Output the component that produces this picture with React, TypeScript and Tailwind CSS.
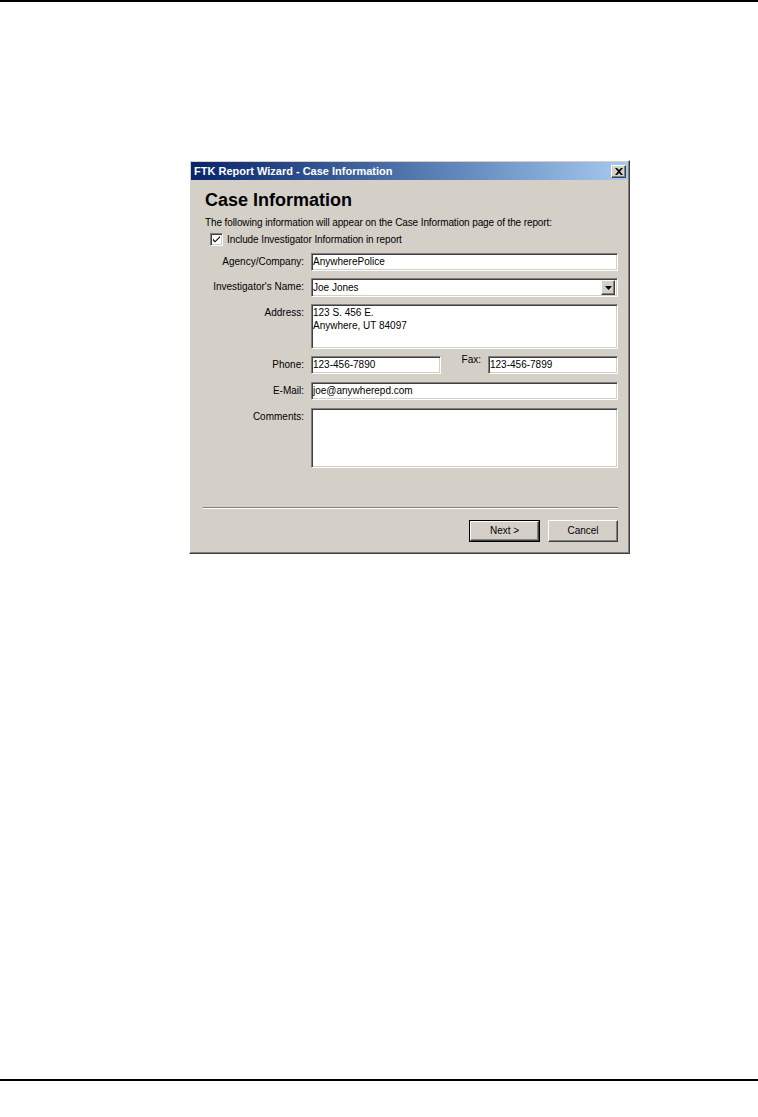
import React from "react";

const sunken =
  "bg-white border border-t-[#808080] border-l-[#808080] border-b-white border-r-white shadow-[inset_1px_1px_0_#404040,inset_-1px_-1px_0_#d4d0c8]";

const raised =
  "bg-[#d4d0c8] border border-t-white border-l-white border-b-[#404040] border-r-[#404040] shadow-[inset_-1px_-1px_0_#808080]";

function Label({ text, className = "" }: { text: string; className?: string }) {
  return (
    <div className={`w-[108px] shrink-0 pr-[7px] pt-[3px] text-right text-[10px] leading-[12px] text-black ${className}`}>
      {text}
    </div>
  );
}

function Field({ value, className = "" }: { value?: string; className?: string }) {
  return (
    <div className={`${sunken} h-[18px] px-[1px] pt-[2px] text-[10px] leading-[12px] text-black ${className}`}>
      {value}
    </div>
  );
}

export default function App() {
  return (
    <div className="flex h-[1117px] flex-col bg-white font-['Liberation_Sans',Arial,sans-serif]">
      <div className="h-[2px] w-full bg-black" />

      {/* Dialog */}
      <div className="ml-[189px] mt-[158px] flex h-[394px] w-[441px] flex-col border border-t-white border-l-white border-b-[#404040] border-r-[#404040] bg-[#d4d0c8] p-[1px] shadow-[inset_-1px_-1px_0_#808080]">
        {/* Title bar */}
        <div className="flex h-[18px] items-center justify-between bg-gradient-to-r from-[#0a246a] to-[#a6caf0] pl-[3px] pr-[2px]">
          <span className="text-[11px] font-bold leading-[13px] text-white">
            FTK Report Wizard - Case Information
          </span>
          <button className={`${raised} flex h-[13px] w-[15px] items-center justify-center p-0`}>
            <svg width="8" height="7" viewBox="0 0 8 7">
              <path d="M0 0h2l2 2 2-2h2L5 3.5 8 7H6L4 5 2 7H0l3-3.5z" fill="#000" />
            </svg>
          </button>
        </div>

        <div className="flex flex-1 flex-col pl-[12px] pr-[10px]">
          <h1 className="ml-[2px] mt-[10px] text-[18px] font-bold leading-[21px] text-black">Case Information</h1>
          <p className="ml-[2px] mt-[6px] text-[10px] leading-[12px] tracking-[-0.11px] text-black">
            The following information will appear on the Case Information page of the report:
          </p>

          {/* Checkbox */}
          <div className="ml-[7px] mt-[4px] flex items-center gap-[4px]">
            <div className={`${sunken} flex h-[13px] w-[13px] items-center justify-center`}>
              <svg width="7" height="7" viewBox="0 0 7 7">
                <path d="M0 2.5v2l2 2 5-5v-1.5L2 5z" fill="#000" />
              </svg>
            </div>
            <span className="text-[10px] leading-[12px] tracking-[-0.1px] text-black">Include Investigator Information in report</span>
          </div>

          <div className="mt-[7px] flex items-start">
            <Label text="Agency/Company:" />
            <Field value="AnywherePolice" className="flex-1" />
          </div>

          <div className="mt-[7px] flex items-start">
            <Label text="Investigator's Name:" />
            <div className={`${sunken} flex h-[19px] flex-1 items-center justify-between pl-[1px] pr-[2px]`}>
              <span className="text-[10px] leading-[12px] text-black">Joe Jones</span>
              <div className={`${raised} flex h-[15px] w-[14px] items-center justify-center`}>
                <svg width="7" height="4" viewBox="0 0 7 4">
                  <path d="M0 0h7L3.5 4z" fill="#000" />
                </svg>
              </div>
            </div>
          </div>

          <div className="mt-[7px] flex items-start">
            <Label text="Address:" />
            <div className={`${sunken} h-[45px] flex-1 px-[1px] pt-[1px] text-[10px] leading-[13px] text-black`}>
              <div>123 S. 456 E.</div>
              <div>Anywhere, UT 84097</div>
            </div>
          </div>

          <div className="mt-[7px] flex items-start">
            <Label text="Phone:" />
            <Field value="123-456-7890" className="w-[130px]" />
            <div className="flex-1 -translate-y-[4px] pr-[7px] pt-[2px] text-right text-[10px] leading-[12px] text-black">Fax:</div>
            <Field value="123-456-7899" className="w-[130px]" />
          </div>

          <div className="mt-[8px] flex items-start">
            <Label text="E-Mail:" />
            <Field value="joe@anywherepd.com" className="flex-1" />
          </div>

          <div className="mt-[8px] flex items-start">
            <Label text="Comments:" />
            <div className={`${sunken} h-[60px] flex-1`} />
          </div>

          {/* Separator */}
          <div className="mt-[39px] h-[2px] border-t border-b border-t-[#808080] border-b-white" />

          <div className="mt-[11px] flex justify-end gap-[8px]">
            <div className="flex h-[22px] border border-black">
              <button className={`${raised} flex h-[20px] w-[69px] items-center justify-center text-[10px] leading-[12px] text-black`}>Next &gt;</button>
            </div>
            <button className={`${raised} flex h-[22px] w-[70px] items-center justify-center text-[10px] leading-[12px] text-black`}>Cancel</button>
          </div>
        </div>
      </div>

      <div className="mt-[525px] h-[2px] w-full bg-black" />
    </div>
  );
}
